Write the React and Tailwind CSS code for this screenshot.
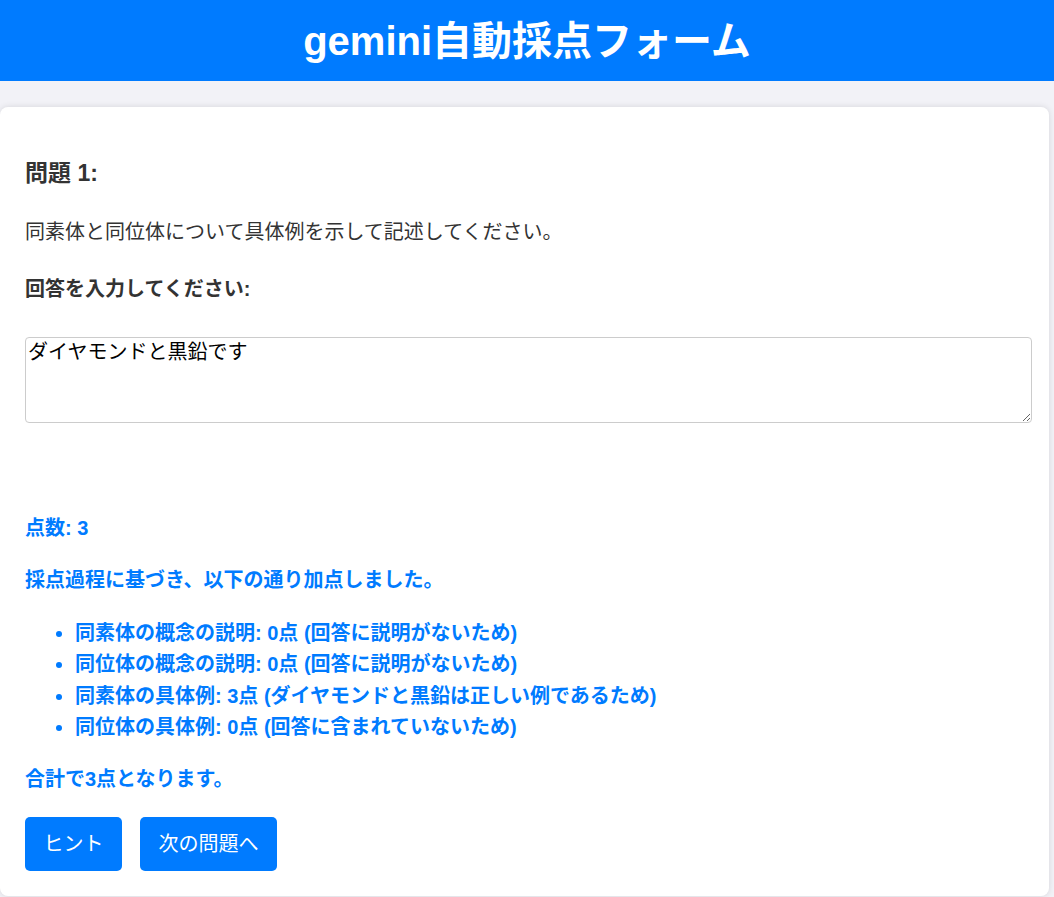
export default function App() {
  const items = [
    "同素体の概念の説明: 0点 (回答に説明がないため)",
    "同位体の概念の説明: 0点 (回答に説明がないため)",
    "同素体の具体例: 3点 (ダイヤモンドと黒鉛は正しい例であるため)",
    "同位体の具体例: 0点 (回答に含まれていないため)",
  ];
  return (
    <div
      className="min-h-[897px] bg-[#f2f2f7]"
      style={{ fontFamily: '"Liberation Sans", "Noto Sans CJK JP", sans-serif' }}
    >
      <header className="h-[81px] bg-[#007bff] flex items-center justify-center">
        <h1 className="text-[40px] font-bold text-white leading-none">gemini自動採点フォーム</h1>
      </header>
      <div className="pt-[26px]">
        <div className="w-[1049px] bg-white rounded-[8px] shadow-[0_0_6px_rgba(0,0,0,0.12)] px-[25px] pt-[25px] pb-[25px]">
          <h3 className="mt-[26px] text-[23px] leading-[30px] font-bold text-[#333]">問題 1:</h3>
          <p className="mt-[30px] text-[20px] leading-[28px] text-[#333]">
            同素体と同位体について具体例を示して記述してください。
          </p>
          <label className="block mt-[29px] text-[20px] leading-[28px] font-bold text-[#333]">
            回答を入力してください:
          </label>
          <textarea
            className="block mt-[34px] w-[1007px] h-[86px] border border-[#ccc] rounded-[4px] px-[2px] pt-[2px] text-[20px] leading-[24px] text-black outline-none"
            defaultValue="ダイヤモンドと黒鉛です"
            style={{ fontFamily: '"Liberation Sans", "Noto Sans CJK JP", sans-serif' }}
          />
          <div className="text-[#007bff] font-bold">
            <p className="mt-[91px] text-[20px] leading-[28px]">点数: 3</p>
            <p className="mt-[24px] text-[20px] leading-[28px]">採点過程に基づき、以下の通り加点しました。</p>
            <ul className="mt-[24px] list-disc pl-[50px] text-[20px] leading-[31.3px]">
              {items.map((t) => (
                <li key={t}>{t}</li>
              ))}
            </ul>
            <p className="mt-[22px] text-[20px] leading-[28px]">合計で3点となります。</p>
          </div>
          <div className="mt-[24px] flex gap-[18px]">
            <button className="h-[54px] px-[18.5px] rounded-[5px] bg-[#007bff] text-white text-[20px]">ヒント</button>
            <button className="h-[54px] px-[18.5px] rounded-[5px] bg-[#007bff] text-white text-[20px]">次の問題へ</button>
          </div>
        </div>
      </div>
    </div>
  );
}
